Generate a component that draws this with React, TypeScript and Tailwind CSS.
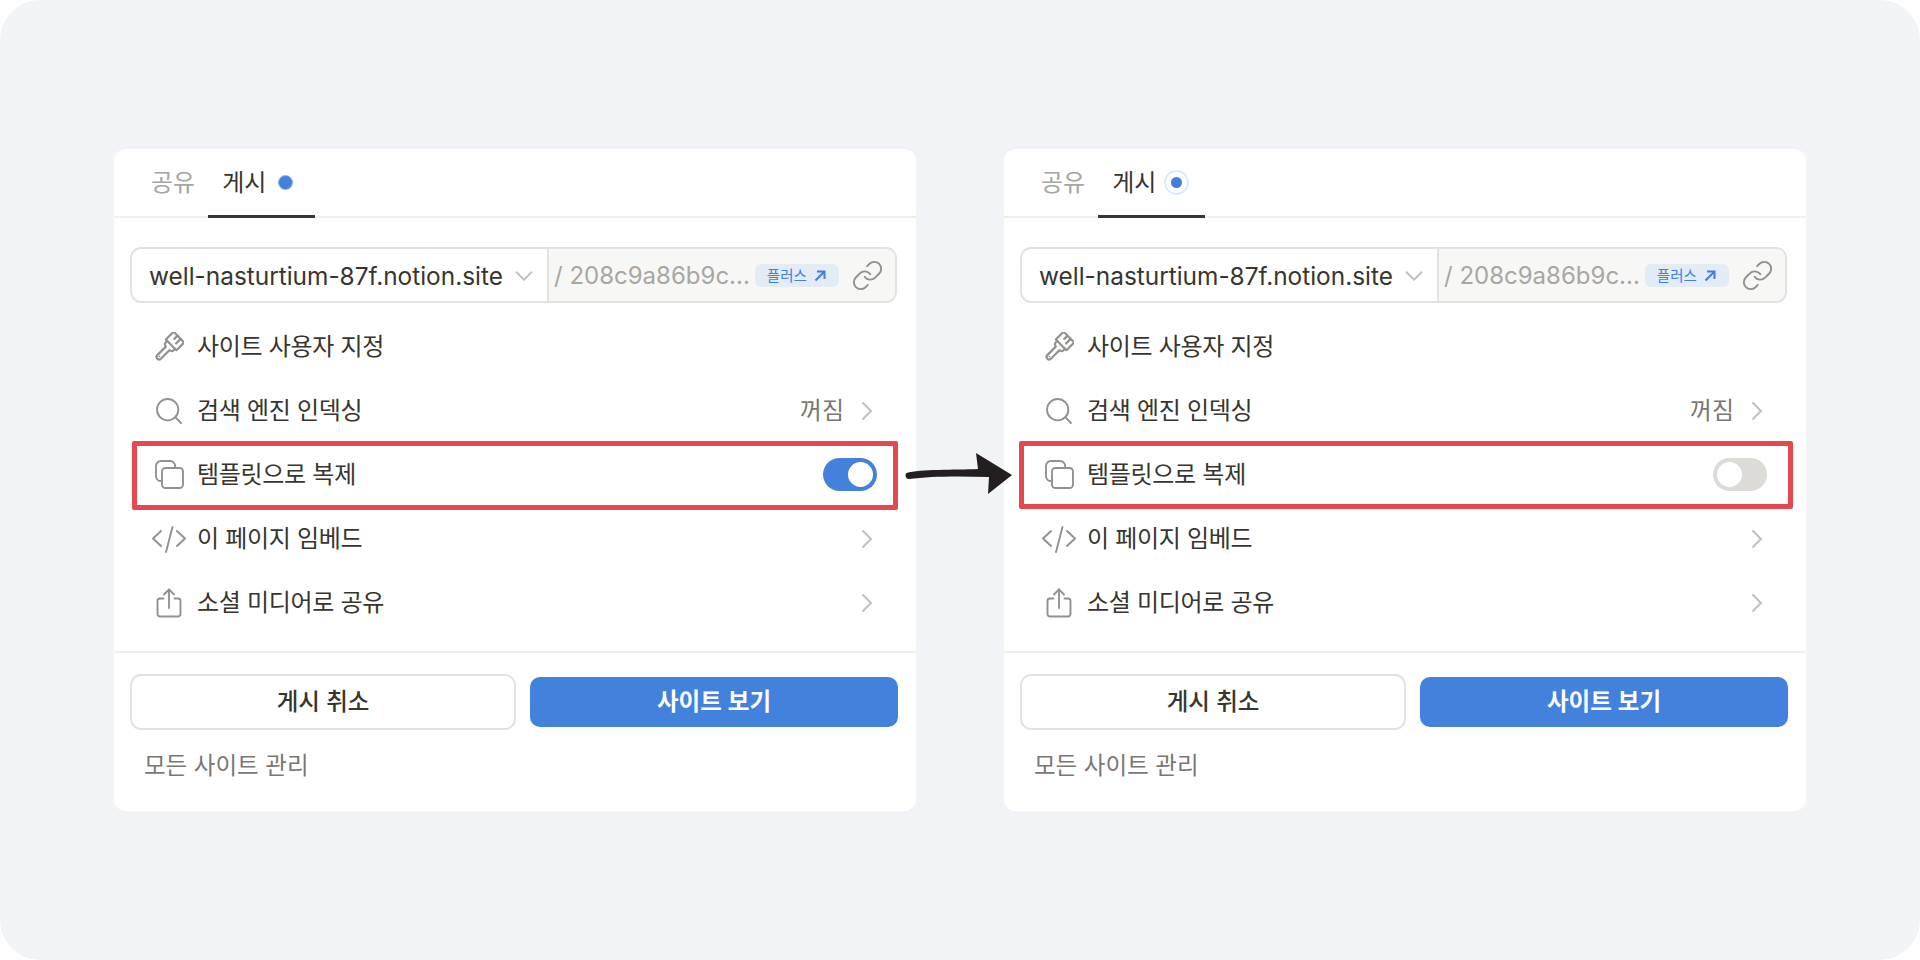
import { Search, ChevronRight, ChevronDown, Link } from 'lucide-react'

function BrushIcon() {
  return (
    <svg viewBox="0 0 30 30" className="w-[30px] h-[30px] text-[#91918e]" fill="none" stroke="currentColor" strokeWidth="2.200" strokeLinejoin="round" strokeLinecap="round">
      <g transform="rotate(45 15 15)">
        <path d="M7.500 1H22.500V12H7.500Z" />
        <path d="M13 1V5.500M17.500 1V7.500" />
        <path d="M9.500 12V14.500Q9.500 16 11 16.500L12.500 17V29a2.500 2.500 0 005 0V17L19 16.500Q20.500 16 20.500 14.500V12" />
        <circle cx="15" cy="28.500" r="0.800" fill="currentColor" stroke="none" />
      </g>
    </svg>
  )
}

function CopyIcon() {
  return (
    <svg viewBox="0 0 30 30" className="w-[30px] h-[30px] text-[#91918e]" fill="none" stroke="currentColor" strokeWidth="1.9">
      <path d="M7 21a5 5 0 01-5-4.500V6a5 5 0 015-5h9.500a5 5 0 014.500 6" />
      <rect x="8" y="8" width="21" height="20" rx="3.500" />
    </svg>
  )
}

function CodeIcon() {
  return (
    <svg viewBox="0 0 36 30" className="w-[36px] h-[30px] text-[#91918e]" fill="none" stroke="currentColor" strokeWidth="1.9" strokeLinecap="round" strokeLinejoin="round">
      <path d="M10 7l-8 7.500 8 7.500" />
      <path d="M26 7l8 7.500-8 7.500" />
      <path d="M21.500 3l-6.500 25" />
    </svg>
  )
}

function ShareIcon() {
  return (
    <svg viewBox="0 0 30 30" className="w-[30px] h-[30px] text-[#91918e]" fill="none" stroke="currentColor" strokeWidth="1.9" strokeLinecap="round" strokeLinejoin="round">
      <path d="M9.500 10.500H6a2.500 2.500 0 00-2.500 2.500v13a2.500 2.500 0 002.500 2.500h18a2.500 2.500 0 002.500-2.500V13a2.500 2.500 0 00-2.500-2.500h-3.500" />
      <path d="M15 20V1.500" />
      <path d="M10 6.500L15 1.500 20 6.500" />
    </svg>
  )
}

function Row({ icon, label, right, arrow }: { icon: React.ReactNode; label: string; right?: string; arrow?: boolean }) {
  return (
    <div className="h-[64px] flex items-center pl-[37px] pr-[33px]">
      <div className="w-[36px] flex justify-center mr-[10px] shrink-0">{icon}</div>
      <span className="text-[24px] text-[#37352f] tracking-[-0.3px]">{label}</span>
      <div className="ml-auto flex items-center gap-[7px]">
        {right && <span className="text-[24px] text-[#787774]">{right}</span>}
        {arrow && <ChevronRight className="w-[32px] h-[32px] text-[#c1c0bc]" strokeWidth={1.5} />}
      </div>
    </div>
  )
}

function Panel({ on }: { on: boolean }) {
  return (
    <div className="w-[802px] h-[662px] bg-white rounded-[12px] flex flex-col shrink-0">
      <div className="h-[69px] border-b-2 border-[#efefed] flex pl-[37px] gap-[27px] items-stretch">
        <div className="text-[24px] text-[#a5a5a2] flex items-center">공유</div>
        <div className="relative flex items-center w-[107px] -ml-[14px] pl-[14px] gap-[12px]">
          <span className="text-[24px] text-[#37352f]">게시</span>
          {on ? (
            <span className="w-[15px] h-[15px] rounded-full bg-[#4281dc] border border-[#8fb5ec]" />
          ) : (
            <span className="w-[25px] h-[25px] -ml-[4px] rounded-full border-2 border-[#dfe9f7] flex items-center justify-center">
              <span className="w-[11px] h-[11px] rounded-full bg-[#3f7fdd]" />
            </span>
          )}
          <span className="absolute left-0 right-0 -bottom-[2px] h-[3px] bg-[#37352f]" />
        </div>
      </div>
      <div className="mt-[29px] ml-[16px] mr-[19px] h-[56px] border-2 border-[#e3e2e0] rounded-[11px] flex overflow-hidden">
        <div className="w-[417px] border-r-2 border-[#e3e2e0] flex items-center pl-[17px] pt-[2px] shrink-0">
          <span className="text-[24.400px] text-[#37352f]">well-nasturtium-87f.notion.site</span>
          <ChevronDown className="ml-[6px] w-[30px] h-[30px] text-[#c1c0bc]" strokeWidth={1.5} />
        </div>
        <div className="flex-1 bg-[#f7f7f5] flex items-center pl-[5px] pt-[1px]">
          <span className="text-[24px] text-[#a8a7a3]">/ 208c9a86b9c...</span>
          <span className="ml-[5px] h-[23px] w-[84px] rounded-[6px] bg-[#e3ebf6] text-[#3f7fdd] text-[14.500px] flex items-center justify-center gap-[6px]">
            플러스
            <svg viewBox="0 0 14 14" className="w-[14px] h-[14px]" fill="none" stroke="currentColor" strokeWidth="2">
              <path d="M2.500 11.500L11.500 2.500M4 2.500H11.500V10" />
            </svg>
          </span>
          <Link className="ml-[12px] w-[33px] h-[33px] text-[#91918e]" strokeWidth={1.4} />
        </div>
      </div>
      <div className="mt-[12px] flex flex-col">
        <Row icon={<BrushIcon />} label="사이트 사용자 지정" />
        <Row icon={<Search className="w-[32px] h-[32px] text-[#91918e]" strokeWidth={1.4} />} label="검색 엔진 인덱싱" right="꺼짐" arrow />
        <div className="relative">
          <Row icon={<CopyIcon />} label="템플릿으로 복제" />
          <div className={on ? 'absolute left-[18px] right-[18px] -top-[2px] -bottom-[3px] border-[5px] border-[#e5484f] rounded-[2px]' : 'absolute left-[15px] right-[13px] -top-[2px] -bottom-[2px] border-[5px] border-[#e5484f] rounded-[2px]'} />
          <div className={on ? 'absolute right-[39px] top-[15px] w-[54px] h-[33px] rounded-full bg-[#4281dc] flex items-center justify-end pr-[4px]' : 'absolute right-[39px] top-[15px] w-[54px] h-[33px] rounded-full bg-[#dcdbd7] flex items-center pl-[4px]'}>
            <span className="w-[25px] h-[25px] rounded-full bg-white" />
          </div>
        </div>
        <Row icon={<CodeIcon />} label="이 페이지 임베드" arrow />
        <Row icon={<ShareIcon />} label="소셜 미디어로 공유" arrow />
      </div>
      <div className="mt-[16px] border-t-2 border-[#efefed] pl-[16px] pr-[18px] pt-[21px] flex flex-col">
        <div className="flex gap-[14px] items-center">
          <button className="w-[386px] h-[56px] border-2 border-[#e3e2e0] rounded-[11px] bg-white text-[23.500px] font-medium text-[#37352f]">게시 취소</button>
          <button className="flex-1 h-[50px] rounded-[10px] bg-[#4281dc] text-[23.500px] font-semibold text-white">사이트 보기</button>
        </div>
        <div className="mt-[18px] pl-[14px] text-[23.500px] text-[#787774]">모든 사이트 관리</div>
      </div>
    </div>
  )
}

export default function App() {
  return (
    <div className="w-[1920px] h-[960px] bg-white font-['Inter','Noto_Sans_CJK_KR',sans-serif]">
      <div className="relative w-full h-full bg-[#f1f3f7] rounded-[40px] flex justify-center gap-[88px] pt-[149px]">
        <Panel on />
        <Panel on={false} />
        <svg viewBox="0 0 108 44" className="absolute left-[905px] top-[452px] w-[108px] h-[44px] text-[#231f20]" fill="currentColor">
          <path d="M1.500 21C15 17 50 18 73 17L71 1L107 23L83 42L84 25C55 24 25 24 4 27C0 27 0 22 1.500 21Z" />
        </svg>
      </div>
    </div>
  )
}
